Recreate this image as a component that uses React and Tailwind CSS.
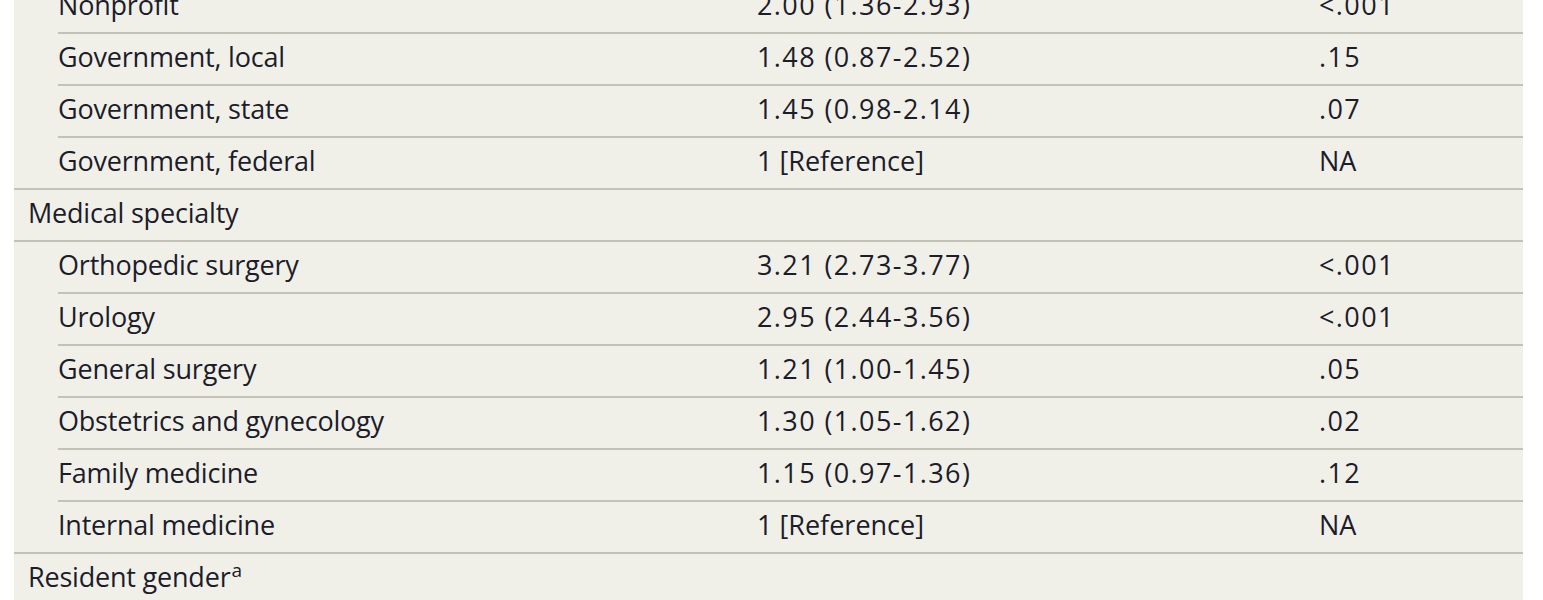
import React from 'react';

const rows = [
  { label: 'Nonprofit', or: '2.00 (1.36-2.93)', p: '<.001' },
  { label: 'Government, local', or: '1.48 (0.87-2.52)', p: '.15' },
  { label: 'Government, state', or: '1.45 (0.98-2.14)', p: '.07' },
  { label: 'Government, federal', or: '1 [Reference]', p: 'NA', last: true },
  { group: 'Medical specialty' },
  { label: 'Orthopedic surgery', or: '3.21 (2.73-3.77)', p: '<.001' },
  { label: 'Urology', or: '2.95 (2.44-3.56)', p: '<.001' },
  { label: 'General surgery', or: '1.21 (1.00-1.45)', p: '.05' },
  { label: 'Obstetrics and gynecology', or: '1.30 (1.05-1.62)', p: '.02' },
  { label: 'Family medicine', or: '1.15 (0.97-1.36)', p: '.12' },
  { label: 'Internal medicine', or: '1 [Reference]', p: 'NA', last: true },
  { group: 'Resident gender', sup: 'a' },
];

export default function App() {
  return (
    <div className="w-[1543px] h-[600px] overflow-hidden bg-white font-['Open_Sans',sans-serif] text-[27px] tracking-[-0.2px] text-[#1c1d2b] [font-variant-ligatures:none]">
      <div className="ml-[14px] w-[1509px] bg-[#f1f0e8] -mt-[18px] pb-10">
        {rows.map((r, i) =>
          r.group ? (
            <div key={i} className="h-[52px] flex items-center pl-[14px] pb-[3px] border-b-2 border-[#c3c2b7]">
              <span>
                {r.group}
                {r.sup && <sup className="text-[19px] relative -top-[10px] ml-[1px]">{r.sup}</sup>}
              </span>
            </div>
          ) : (
            <div
              key={i}
              className={
                'h-[52px] grid grid-cols-[699px_562px_1fr] items-center pb-[3px] ' +
                (r.last ? 'pl-[44px] border-b-2 border-[#c3c2b7]' : 'ml-[44px] border-b-2 border-[#c3c2b7]')
              }
            >
              <span>{r.label}</span>
              <span className={r.or.startsWith('1 [') ? 'tracking-[0px]' : 'tracking-[1.4px]'}>{r.or}</span>
              <span className={r.p === 'NA' ? 'tracking-[0px]' : 'tracking-[1.4px]'}>{r.p}</span>
            </div>
          )
        )}
      </div>
    </div>
  );
}
